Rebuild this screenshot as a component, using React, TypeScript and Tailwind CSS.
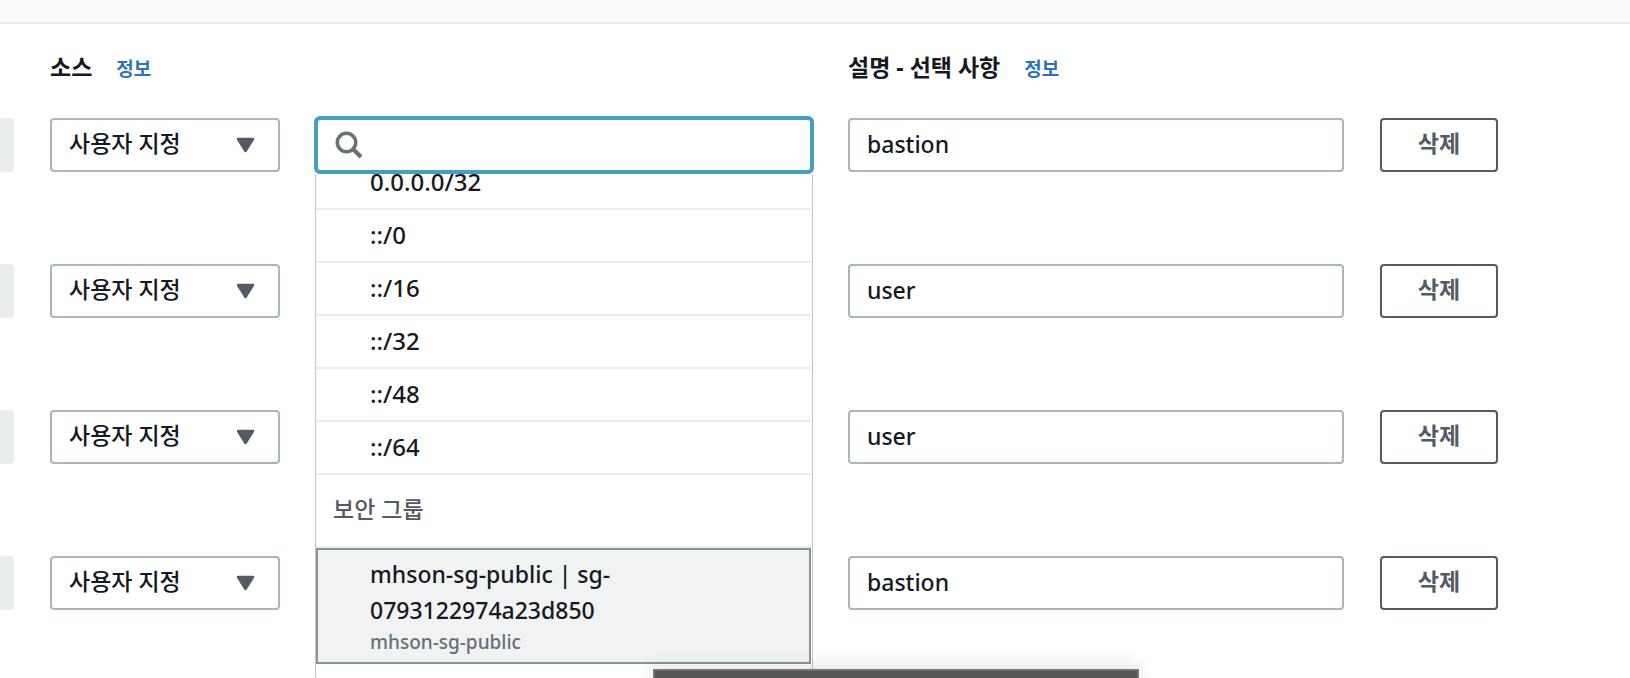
import { useState } from "react";

const initialRules = [
  { id: 1, description: "bastion" },
  { id: 2, description: "user" },
  { id: 3, description: "user" },
  { id: 4, description: "bastion" },
];

const cidrs = ["0.0.0.0/32", "::/0", "::/16", "::/32", "::/48", "::/64"];

const columns = "grid grid-cols-[14px_230px_minmax(0,1fr)_minmax(0,1fr)_118px] gap-x-9 pr-[132px]";

function InfoLink() {
  return (
    <a href="#info" className="text-[19px] leading-8 font-bold text-[#2e73b8]">
      정보
    </a>
  );
}

function SourceSelect({ id }: { id: number }) {
  return (
    <div className="relative">
      <select
        id={`source-type-${id}`}
        aria-label="소스"
        className="h-[54px] w-full appearance-none rounded-[4px] border-2 border-[#aab7b8] bg-white pr-14 pb-1 pl-[17px] text-[23px] text-[#16191f] outline-none"
      >
        <option>사용자 지정</option>
      </select>
      <svg
        className="pointer-events-none absolute top-[19px] right-[25px]"
        width="19"
        height="16"
        viewBox="0 0 19 16"
        aria-hidden="true"
      >
        <path d="M2 2h15L9.500 14z" fill="#545b64" stroke="#545b64" strokeWidth="2.500" strokeLinejoin="round" />
      </svg>
    </div>
  );
}

function SourceSearch() {
  return (
    <div className="relative z-10">
      <div className="-mx-[2px] -my-[2px]">
        <input
          type="text"
          role="combobox"
          aria-expanded="true"
          aria-controls="source-options"
          aria-label="소스 검색"
          className="block h-[58px] w-full rounded-[6px] border-4 border-[#449fc7] bg-white pr-4 pl-[54px] text-[23px] text-[#16191f] outline-none"
        />
      </div>
      <svg
        className="pointer-events-none absolute top-[13px] left-[19px]"
        width="28"
        height="28"
        viewBox="0 0 28 28"
        fill="none"
        stroke="#687078"
        aria-hidden="true"
      >
        <circle cx="11.500" cy="11.500" r="9.200" strokeWidth="3.500" />
        <path d="M18 18l8 8" strokeWidth="4" />
      </svg>
      <div className="absolute -inset-x-px top-[56px] h-[640px] overflow-hidden border-x border-[#bfc5c9] bg-white pr-px">
        <ul id="source-options" role="listbox" aria-label="소스" className="-mt-[17px] text-[23px] text-[#16191f]">
          {cidrs.map((cidr) => (
            <li
              key={cidr}
              role="option"
              aria-selected="false"
              className="h-[53px] border-b-2 border-[#eaeded] pl-[54px] text-2xl leading-[49px]"
            >
              {cidr}
            </li>
          ))}
          <li
            role="presentation"
            className="h-[73px] border-b-2 border-[#eaeded] pl-[17px] leading-[68px] text-[#545b64]"
          >
            보안 그룹
          </li>
          <li
            role="option"
            aria-selected="true"
            className="h-[116px] border-2 border-[#879596] bg-[#f1f3f3] pt-[6px] pr-[180px] pl-[52px]"
          >
            <span className="block leading-9">mhson-sg-public | sg-0793122974a23d850</span>
            <span className="block text-[19px] leading-7 text-[#687078]">mhson-sg-public</span>
          </li>
        </ul>
      </div>
    </div>
  );
}

export default function App() {
  const [rules, setRules] = useState(initialRules);

  return (
    <main className="h-screen overflow-hidden bg-white font-['Noto_Sans','Noto_Sans_CJK_KR',sans-serif] font-medium text-[#16191f]">
      <div className="h-6 border-b-2 border-[#eaeded] bg-[#fafafa]" />

      <div className={`${columns} pt-[27px] pb-[33px]`}>
        <div className="col-start-2 flex items-baseline gap-6">
          <h2 className="text-[23px] leading-8 font-bold">소스</h2>
          <InfoLink />
        </div>
        <div className="col-start-4 flex items-baseline gap-6">
          <h2 className="text-[23px] leading-8 font-bold">설명 - 선택 사항</h2>
          <InfoLink />
        </div>
      </div>

      <div className="flex flex-col gap-[92px]">
        {rules.map((rule, index) => (
          <div key={rule.id} className={columns}>
            <div className="h-[54px] rounded-r-[4px] bg-[#eaeded]" />
            <SourceSelect id={rule.id} />
            {index === 0 ? <SourceSearch /> : <div />}
            <input
              type="text"
              aria-label="설명"
              value={rule.description}
              onChange={(event) =>
                setRules(rules.map((r) => (r.id === rule.id ? { ...r, description: event.target.value } : r)))
              }
              className="h-[54px] w-full rounded-[4px] border-2 border-[#aab7b8] bg-white px-[17px] pb-[2px] text-[23px] outline-none"
            />
            <button
              type="button"
              onClick={() => setRules(rules.filter((r) => r.id !== rule.id))}
              className="h-[54px] rounded-[4px] border-2 border-[#545b64] bg-white pb-1 text-[23px] font-bold text-[#545b64]"
            >
              삭제
            </button>
          </div>
        ))}
      </div>

      <div className="fixed bottom-0 left-[653px] z-20 h-[9px] w-[486px] border-2 border-b-0 border-[#757575] bg-[#555555] shadow-[0_0_18px_rgba(0,0,0,0.2)]" />
    </main>
  );
}
